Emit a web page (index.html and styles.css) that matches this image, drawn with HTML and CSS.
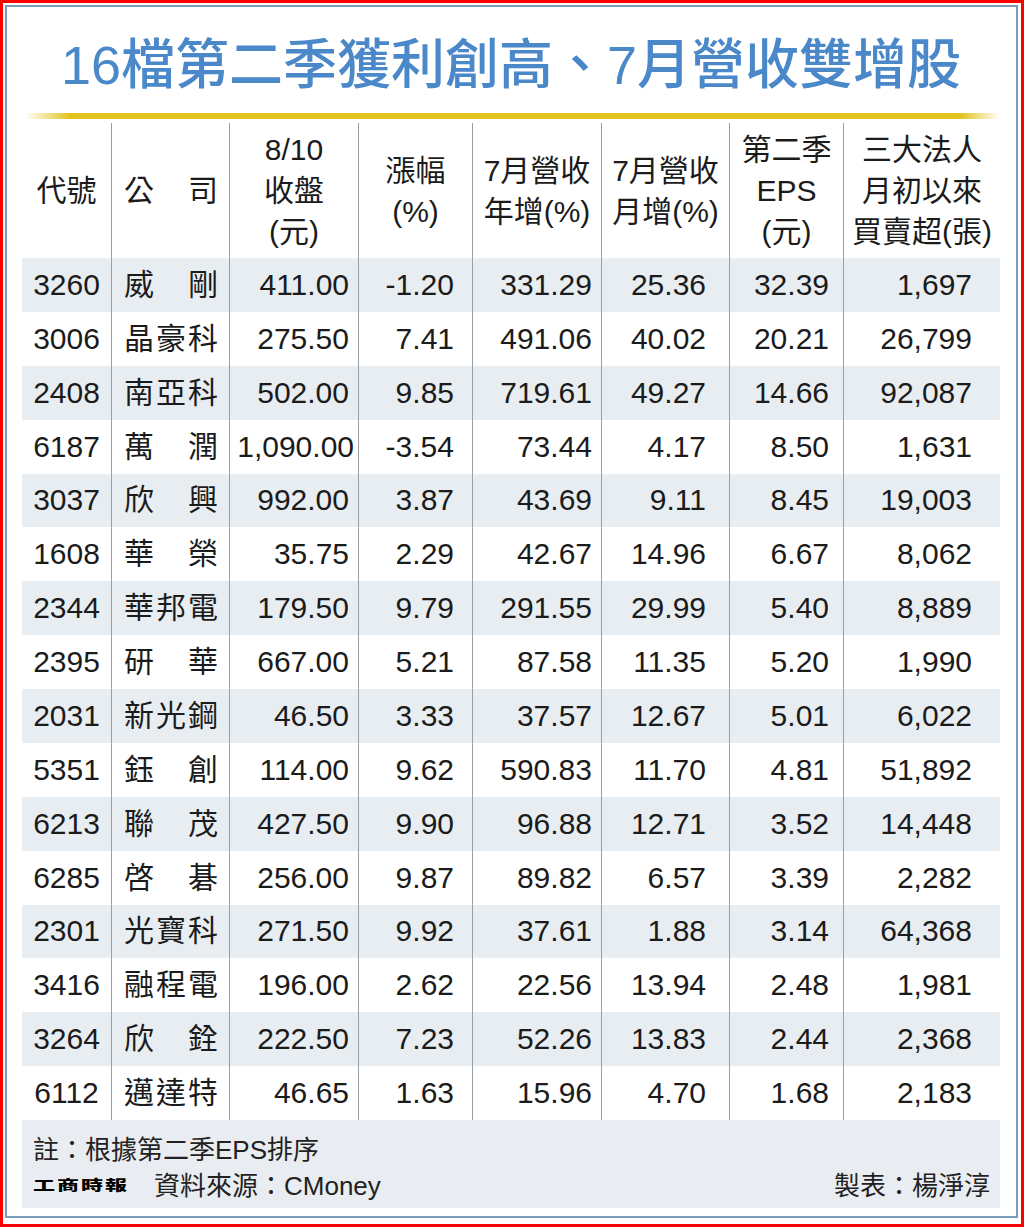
FILE: index.html
```html
<!DOCTYPE html>
<html lang="zh-Hant">
<head>
<meta charset="utf-8">
<title>16檔第二季獲利創高、7月營收雙增股</title>
<link rel="stylesheet" href="styles.css">
</head>
<body>
<div class="outer">
  <div class="frame">
    <h1 class="title">16檔第二季獲利創高、7月營收雙增股</h1>
    <div class="rule"></div>
    <table class="data">
      <colgroup>
        <col class="w1"><col class="w2"><col class="w3"><col class="w4"><col class="w5"><col class="w6"><col class="w7"><col class="w8">
      </colgroup>
      <thead>
        <tr>
          <th class="code">代號</th>
          <th class="name">公司</th>
          <th>8/10<br>收盤<br>(元)</th>
          <th>漲幅<br>(%)</th>
          <th>7月營收<br>年增(%)</th>
          <th>7月營收<br>月增(%)</th>
          <th>第二季<br>EPS<br>(元)</th>
          <th>三大法人<br>月初以來<br>買賣超(張)</th>
        </tr>
      </thead>
      <tbody>
        <tr><td>3260</td><td>威剛</td><td>411.00</td><td>-1.20</td><td>331.29</td><td>25.36</td><td>32.39</td><td>1,697</td></tr>
        <tr><td>3006</td><td>晶豪科</td><td>275.50</td><td>7.41</td><td>491.06</td><td>40.02</td><td>20.21</td><td>26,799</td></tr>
        <tr><td>2408</td><td>南亞科</td><td>502.00</td><td>9.85</td><td>719.61</td><td>49.27</td><td>14.66</td><td>92,087</td></tr>
        <tr><td>6187</td><td>萬潤</td><td class="tight">1,090.00</td><td>-3.54</td><td>73.44</td><td>4.17</td><td>8.50</td><td>1,631</td></tr>
        <tr><td>3037</td><td>欣興</td><td>992.00</td><td>3.87</td><td>43.69</td><td>9.11</td><td>8.45</td><td>19,003</td></tr>
        <tr><td>1608</td><td>華榮</td><td>35.75</td><td>2.29</td><td>42.67</td><td>14.96</td><td>6.67</td><td>8,062</td></tr>
        <tr><td>2344</td><td>華邦電</td><td>179.50</td><td>9.79</td><td>291.55</td><td>29.99</td><td>5.40</td><td>8,889</td></tr>
        <tr><td>2395</td><td>研華</td><td>667.00</td><td>5.21</td><td>87.58</td><td>11.35</td><td>5.20</td><td>1,990</td></tr>
        <tr><td>2031</td><td>新光鋼</td><td>46.50</td><td>3.33</td><td>37.57</td><td>12.67</td><td>5.01</td><td>6,022</td></tr>
        <tr><td>5351</td><td>鈺創</td><td>114.00</td><td>9.62</td><td>590.83</td><td>11.70</td><td>4.81</td><td>51,892</td></tr>
        <tr><td>6213</td><td>聯茂</td><td>427.50</td><td>9.90</td><td>96.88</td><td>12.71</td><td>3.52</td><td>14,448</td></tr>
        <tr><td>6285</td><td>啓碁</td><td>256.00</td><td>9.87</td><td>89.82</td><td>6.57</td><td>3.39</td><td>2,282</td></tr>
        <tr><td>2301</td><td>光寶科</td><td>271.50</td><td>9.92</td><td>37.61</td><td>1.88</td><td>3.14</td><td>64,368</td></tr>
        <tr><td>3416</td><td>融程電</td><td>196.00</td><td>2.62</td><td>22.56</td><td>13.94</td><td>2.48</td><td>1,981</td></tr>
        <tr><td>3264</td><td>欣銓</td><td>222.50</td><td>7.23</td><td>52.26</td><td>13.83</td><td>2.44</td><td>2,368</td></tr>
        <tr><td>6112</td><td>邁達特</td><td>46.65</td><td>1.63</td><td>15.96</td><td>4.70</td><td>1.68</td><td>2,183</td></tr>
      </tbody>
    </table>
    <div class="foot">
      <div class="foot-row">註：根據第二季EPS排序</div>
      <div class="foot-row">
        <div class="src"><span class="logo">工商時報</span>資料來源：CMoney</div>
        <div class="maker">製表：楊淨淳</div>
      </div>
    </div>
  </div>
</div>
</body>
</html>
```

FILE: styles.css
```css
* { box-sizing: border-box; }
html, body { margin: 0; padding: 0; background: #fff; }
body {
  font-family: "Liberation Sans", "Noto Sans CJK TC", sans-serif;
  color: #1b1b1b;
}
.outer {
  width: 1024px;
  height: 1227px;
  border: 3px solid #ff0000;
  padding: 2px 3px 6px 2px;
}
.frame {
  height: 100%;
  border: 2px solid #7b9bbd;
  padding: 28px 16px 0 15px;
}
.title {
  margin: 0;
  font-size: 54px;
  line-height: 60px;
  font-weight: 500;
  color: #4a88c9;
  text-align: center;
  white-space: nowrap;
}
.rule {
  height: 6px;
  margin: 18px 0 0 3px;
  background: linear-gradient(to right, rgba(226,194,30,0) 0, #e2c21e 45px, #e2c21e calc(100% - 40px), rgba(226,194,30,0) 100%);
}
.data {
  margin-top: 4px;
  width: 978px;
  table-layout: fixed;
  border-collapse: separate;
  border-spacing: 0;
  font-size: 30px;
}
.w1 { width: 89px; }
.w2 { width: 118px; }
.w3 { width: 129px; }
.w4 { width: 114px; }
.w5 { width: 129px; }
.w6 { width: 128px; }
.w7 { width: 114px; }
.w8 { width: 157px; }

.data th, .data td {
  padding: 0;
  white-space: nowrap;
  vertical-align: middle;
  border-left: 1px solid #9a9fa5;
}
.data th:first-child, .data td:first-child { border-left: none; }
.data th {
  height: 135px;
  font-weight: normal;
  line-height: 41px;
  text-align: center;
}
.data td {
  height: 53.875px;
  line-height: 34px;
  text-align: right;
}
.data tbody tr:nth-child(odd) td { background: #e8edf2; }

.data td:nth-child(1) { text-align: center; }
.data th.name, .data td:nth-child(2) {
  text-align: justify;
  text-align-last: justify;
  padding: 0 11px 0 12px;
}
.data td:nth-child(3) { padding-right: 9px; }
.data td.tight { padding-right: 4px; }
.data td:nth-child(4) { padding-right: 18px; }
.data td:nth-child(5) { padding-right: 9px; }
.data td:nth-child(6) { padding-right: 23px; }
.data td:nth-child(7) { padding-right: 14px; }
.data td:nth-child(8) { padding-right: 28px; }

.foot {
  width: 978px;
  height: 88px;
  background: #e9edf1;
  padding: 12px 10px 0 11px;
  font-size: 26px;
  line-height: 36px;
  color: #222;
}
.foot-row {
  display: flex;
  justify-content: space-between;
  align-items: center;
  white-space: nowrap;
}
.src { display: flex; align-items: center; }
.logo {
  display: inline-block;
  font-size: 22px;
  font-weight: 900;
  letter-spacing: 2px;
  color: #000;
  transform: scaleY(0.62);
  margin-right: 25px;
}
```
